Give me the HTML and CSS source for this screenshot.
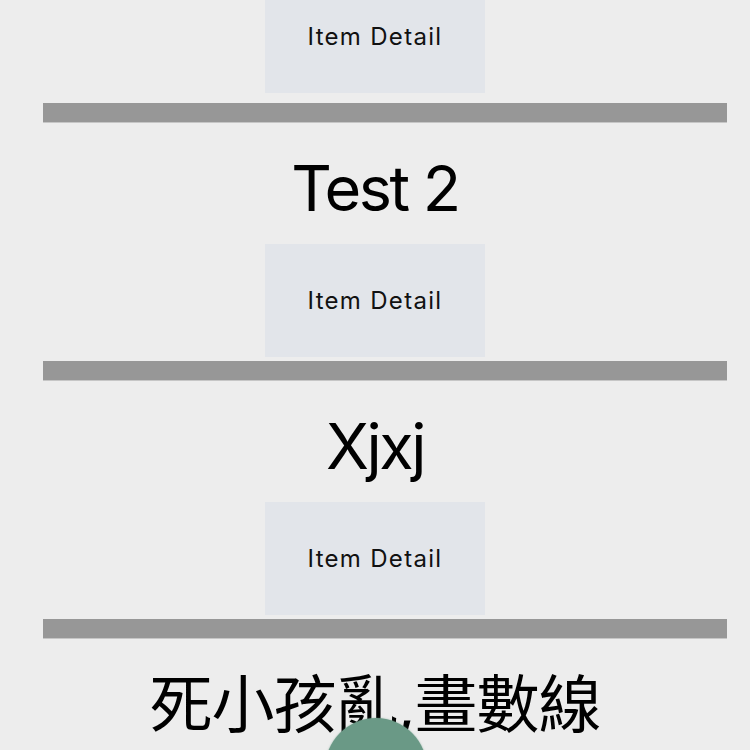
FILE: index.html
```html
<!DOCTYPE html>
<html>
<head>
<meta charset="utf-8">
<link rel="stylesheet" href="styles.css">
</head>
<body>
<div class="list">
  <section class="item item-first">
    <div class="detail">Item Detail</div>
    <div class="bar"></div>
  </section>
  <section class="item">
    <h2 class="title">Test 2</h2>
    <div class="detail">Item Detail</div>
    <div class="bar"></div>
  </section>
  <section class="item">
    <h2 class="title">Xjxj</h2>
    <div class="detail">Item Detail</div>
    <div class="bar"></div>
  </section>
  <section class="item">
    <h2 class="title title-cjk">死小孩亂,畫數線</h2>
  </section>
</div>
<div class="fab"></div>
</body>
</html>
```
FILE: styles.css
```css
html, body {
  margin: 0;
  padding: 0;
  background: #ededed;
  overflow: hidden;
  height: 750px;
}
body {
  font-family: Inter, "Noto Sans CJK TC", sans-serif;
  color: #000;
}
.list {
  margin-top: -20px;
  display: flex;
  flex-direction: column;
}
.item {
  display: flex;
  flex-direction: column;
  align-items: center;
}
.title {
  margin: 27px 0 18px;
  font-size: 63px;
  line-height: 76px;
  font-weight: 400;
  letter-spacing: -2.5px;
  text-align: center;
  white-space: nowrap;
}
.title-cjk {
  letter-spacing: -1px;
}
.detail {
  width: 220px;
  height: 113px;
  background: #e2e5ea;
  display: flex;
  align-items: center;
  justify-content: center;
  font-size: 24px;
  letter-spacing: 1.3px;
  color: #111;
}
.bar {
  align-self: stretch;
  margin: 4px 23px 0 43px;
  height: 19px;
  background: #979797;
  border-bottom: 1px solid #c6c6c6;
}
.item-first .bar {
  margin-top: 10px;
}
.fab {
  position: fixed;
  left: 325px;
  top: 718px;
  width: 102px;
  height: 102px;
  border-radius: 50%;
  background: #6a9986;
  box-shadow: 0 0 2px rgba(106, 153, 134, 0.6);
}
```
